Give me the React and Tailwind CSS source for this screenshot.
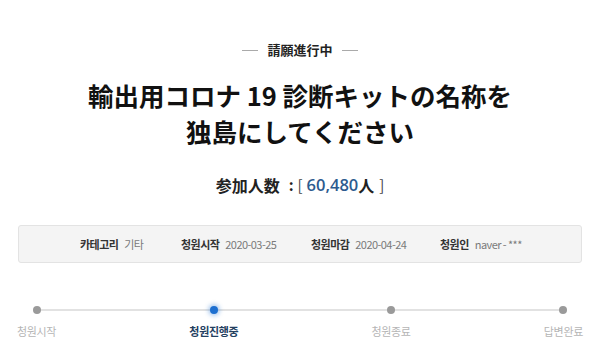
import React from 'react';

const steps = [
  { label: '청원시작' },
  { label: '청원진행중', active: true },
  { label: '청원종료' },
  { label: '답변완료' },
];

const meta = [
  ['카테고리', '기타'],
  ['청원시작', '2020-03-25'],
  ['청원마감', '2020-04-24'],
  ['청원인', 'naver - ***'],
];

const App = () => {
  return (
    <div className="w-[600px] h-[357px] bg-white overflow-hidden font-['Noto_Sans_CJK_KR',sans-serif]">
      {/* status */}
      <div className="pt-[41px] flex items-center justify-center gap-[9px]">
        <span className="w-[16px] h-px bg-[#aaa]" />
        <span className="text-[13px] leading-[18px] font-bold text-[#222] font-['Noto_Sans_CJK_JP',sans-serif]">請願進行中</span>
        <span className="w-[16px] h-px bg-[#aaa]" />
      </div>

      {/* title */}
      <h1 className="mt-[18px] text-center text-[25.5px] leading-[36px] font-bold text-[#111] font-['Noto_Sans_CJK_JP',sans-serif]">
        輸出用コロナ 19 診断キットの名称を
        <br />
        独島にしてください
      </h1>

      {/* count */}
      <div className="mt-[24px] flex items-center justify-center text-[15px] leading-[24px] font-bold text-[#222] font-['Noto_Sans_CJK_JP',sans-serif]">
        <span className="text-[16px]">参加人数</span>
        <span className="ml-[9px]">:</span>
        <span className="ml-[4px] font-normal text-[#444]">[</span>
        <span className="ml-[4px] text-[16.5px] text-[#2d5b8f] font-['Open_Sans',sans-serif] font-semibold">60,480</span>
        <span className="text-[16px]">人</span>
        <span className="ml-[5px] font-normal text-[#444]">]</span>
      </div>

      {/* info box */}
      <div className="mt-[28px] mx-[18px] h-[38px] bg-[#f4f4f4] border border-[#e3e3e3] rounded-[3px] flex items-center pl-[61px] text-[11px] tracking-[-0.05em]">
        {meta.map(([k, v], i) => (
          <div key={k} className={`flex items-center gap-[6px] ${i === 0 ? 'w-[101px]' : i === 1 ? 'w-[130px]' : i === 2 ? 'w-[129px]' : ''}`}>
            <span className="font-bold text-[#333]">{k}</span>
            <span className="text-[#7a7a7a]">{v}</span>
          </div>
        ))}
      </div>

      {/* timeline */}
      <div className="relative mt-[43px] mx-[17px] flex justify-between">
        <div className="absolute left-[20px] right-[20px] top-[3px] h-[2px] bg-[#e2e2e2]" />
        {steps.map((s) => (
          <div key={s.label} className="relative flex flex-col items-center">
            {s.active ? (
              <span className="w-[8px] h-[8px] rounded-full bg-[#1d6fd0] shadow-[0_0_4px_2px_rgba(29,111,208,0.35)]" />
            ) : (
              <span className="w-[8px] h-[8px] rounded-full bg-[#9a9a9a]" />
            )}
            <span
              className={`mt-[9px] text-[11px] leading-[16px] tracking-[-0.03em] ${
                s.active ? 'font-bold text-[#23405f]' : 'text-[#b5b5b5]'
              }`}
            >
              {s.label}
            </span>
          </div>
        ))}
      </div>
    </div>
  );
};

export default App;
